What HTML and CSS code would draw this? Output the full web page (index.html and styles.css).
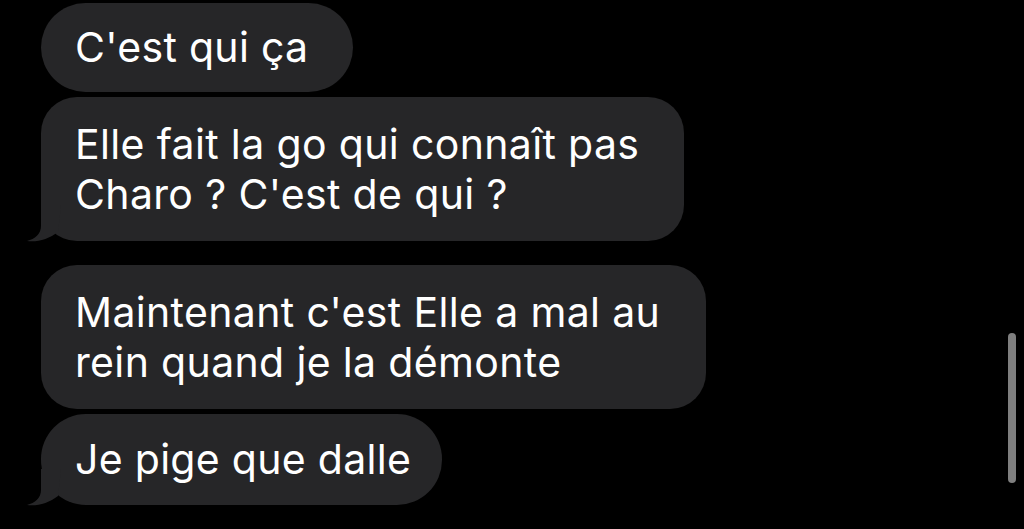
FILE: index.html
```html
<!DOCTYPE html>
<html lang="fr">
<head>
<meta charset="utf-8">
<title>Messages</title>
<link rel="stylesheet" href="styles.css">
</head>
<body>
<main class="thread">
  <div class="bubble single b1">C'est qui ça</div>
  <div class="bubble multi b2 has-tail">Elle fait la go qui connaît pas<br>Charo ? C'est de qui ?<svg class="tail" viewBox="0 0 34 37" width="34" height="37"><path d="M14 0 L14 21 C14 29 8 34 0 36 C10 37.5 22 34 31 27 L34 0 Z"/></svg></div>
  <div class="bubble multi b3">Maintenant c'est Elle a mal au<br>rein quand je la démonte</div>
  <div class="bubble single b4 has-tail">Je pige que dalle<svg class="tail" viewBox="0 0 34 37" width="34" height="37"><path d="M14 0 L14 21 C14 29 8 34 0 36 C10 37.5 22 34 31 27 L34 0 Z"/></svg></div>
</main>
<div class="scrollbar"></div>
</body>
</html>
```
FILE: styles.css
```css
html, body {
  margin: 0;
  padding: 0;
  background: #000;
  height: 100%;
  overflow: hidden;
}

body {
  font-family: Inter, "Noto Sans", "Liberation Sans", sans-serif;
  color: #fff;
}

.thread {
  display: flex;
  flex-direction: column;
  align-items: flex-start;
  padding: 3px 0 0 41px;
}

.bubble {
  position: relative;
  background: #262628;
  white-space: nowrap;
  font-size: 41px;
  padding-left: 34px;
}

.single {
  line-height: 48px;
  padding-top: 20px;
  padding-bottom: 21px;
  border-radius: 45px;
  letter-spacing: 0.3px;
}

.multi {
  line-height: 50px;
  padding-top: 22px;
  padding-bottom: 22px;
  border-radius: 36px;
  letter-spacing: 0.35px;
}

.b1 { padding-right: 45px; }
.b2 { margin-top: 5px; padding-right: 45px; }
.b3 { margin-top: 24px; padding-right: 46px; }
.b4 { margin-top: 5px; padding-top: 21px; padding-bottom: 22px; padding-right: 31px; }

.tail {
  position: absolute;
  left: -14px;
  bottom: -1px;
  fill: #262628;
}

.scrollbar {
  position: fixed;
  right: 8px;
  top: 333px;
  width: 8px;
  height: 150px;
  border-radius: 4px;
  background: #7f7f7f;
}
```
